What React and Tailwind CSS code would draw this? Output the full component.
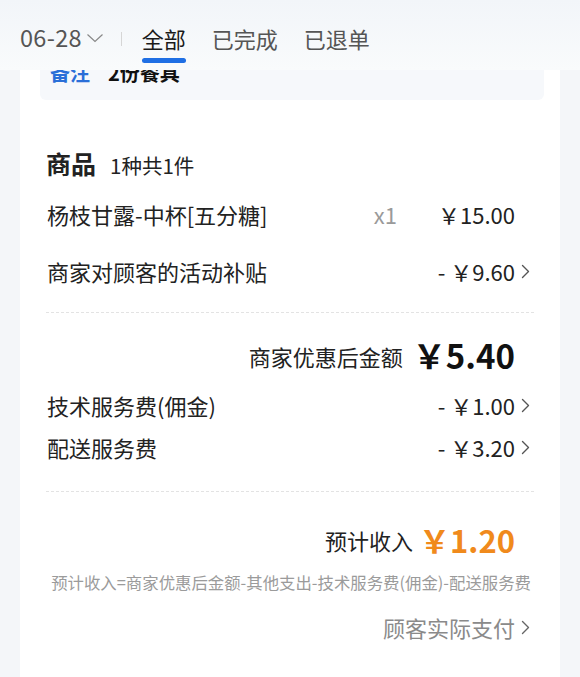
import { Fragment } from 'react'

const Chevron = ({ color = '#555' }) => (
  <svg width="9" height="15" viewBox="0 0 9 15" fill="none">
    <polyline points="1.5,1.5 7.5,7.5 1.5,13.5" stroke={color} strokeWidth="1.4" strokeLinecap="round" strokeLinejoin="round" />
  </svg>
)

function FeeRow({ label, amount, arrow = true, className = '' }) {
  return (
    <div className={`flex items-center h-[40px] pl-[27px] pr-[30px] ${className}`}>
      <span className="flex-1">{label}</span>
      <span>{amount}</span>
      <span className="w-[15px] flex justify-end">{arrow && <Chevron />}</span>
    </div>
  )
}

const Dashed = ({ className = '' }) => (
  <div className={`mx-[26px] border-t-[1.5px] border-dashed border-[#e3e3e3] ${className}`} />
)

export default function App() {
  const tabs = ['全部', '已完成', '已退单']

  return (
    <div className="w-[580px] h-[677px] overflow-hidden bg-[#f4f6f9] font-['Noto_Sans_CJK_SC','Noto_Sans',sans-serif] text-[#222]">
      {/* header */}
      <div className="relative z-10 h-[70px] bg-gradient-to-b from-[#f2f5f9] to-[#f9fbfc] flex items-start pl-[20px] pt-[26px]">
        <div className="flex items-center h-[24px] text-[23.5px] text-[#555] leading-none">
          <span className="tracking-[0.3px]">06-28</span>
          <svg className="ml-[4px]" width="18" height="10" viewBox="0 0 18 10" fill="none">
            <polyline points="1.5,1.5 9,8.5 16.5,1.5" stroke="#888" strokeWidth="1.2" />
          </svg>
        </div>
        <div className="w-px h-[14px] bg-[#d6d6d6] ml-[17px] mt-[6px]" />
        <div className="flex ml-[20px] gap-[26px]">
          {tabs.map((t, i) => (
            <div key={t} className="flex flex-col items-center">
              <span className={`text-[22px] leading-[24px] ${i === 0 ? 'text-[#1a1a1a]' : 'text-[#555]'}`}>{t}</span>
              {i === 0 && <span className="mt-[8px] w-[44px] h-[5px] rounded-full bg-[#1f6fe4]" />}
            </div>
          ))}
        </div>
      </div>

      {/* card */}
      <div className="mx-[20px] bg-white h-[640px]">
        <div className="ml-[20px] mr-[16px] h-[30px] overflow-hidden bg-[#f6f8fb] rounded-b-[6px]">
          <div className="-mt-[8px] pl-[10px] flex gap-[18px] text-[20px] leading-[22px] font-bold">
            <span className="text-[#2a6fd8]">备注</span>
            <span className="text-[#111]">2份餐具</span>
          </div>
        </div>

        <div className="flex items-end h-[40px] mt-[42px] pl-[26px] pb-[6px]">
          <span className="text-[25px] font-bold leading-none">商品</span>
          <span className="ml-[14px] text-[20.5px] leading-none pb-[1px]">1种共1件</span>
        </div>

        <div className="flex items-center h-[40px] mt-[12px] pl-[27px] pr-[30px] text-[22px]">
          <span className="flex-1">杨枝甘露-中杯[五分糖]</span>
          <span className="text-[#9a9a9a]">x1</span>
          <span className="w-[118px] text-right">￥15.00</span>
          <span className="w-[15px]" />
        </div>

        <FeeRow label="商家对顾客的活动补贴" amount="- ￥9.60" className="mt-[17px] text-[22px]" />

        <Dashed className="mt-[21px]" />

        <div className="flex items-center justify-end h-[40px] mt-[23px] pr-[45px]">
          <span className="text-[22px]">商家优惠后金额</span>
          <span className="ml-[10px] text-[33px] font-bold text-[#111]">￥5.40</span>
        </div>

        <FeeRow label="技术服务费(佣金)" amount="- ￥1.00" className="mt-[9px] text-[22px]" />
        <FeeRow label="配送服务费" amount="- ￥3.20" className="mt-[2px] text-[22px]" />

        <Dashed className="mt-[24px]" />

        <div className="flex items-center justify-end h-[40px] mt-[28px] pr-[45px]">
          <span className="text-[22px]">预计收入</span>
          <span className="ml-[6px] text-[31px] font-bold text-[#f08a1c]">￥1.20</span>
        </div>

        <div className="mt-[12px] h-[20px] flex items-center justify-end pr-[29px] text-[16.4px] text-[#9b9b9b] whitespace-nowrap">
          预计收入=商家优惠后金额-其他支出-技术服务费(佣金)-配送服务费
        </div>

        <div className="mt-[15px] h-[40px] flex items-center justify-end pr-[30px] text-[22px] text-[#8a8a8a]">
          <span>顾客实际支付</span>
          <span className="w-[15px] flex justify-end"><Chevron color="#666" /></span>
        </div>
      </div>
    </div>
  )
}
